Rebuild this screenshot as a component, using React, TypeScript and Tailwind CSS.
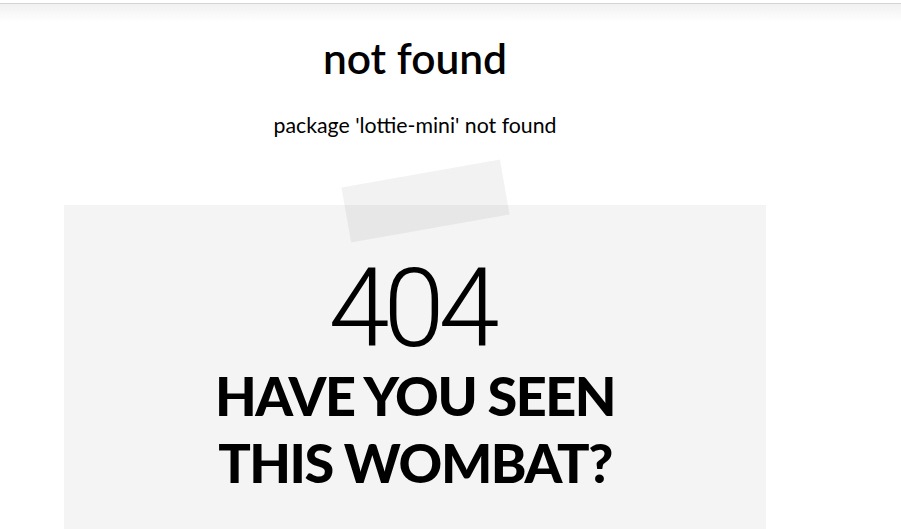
export default function App() {
  return (
    <div className="min-h-[529px] overflow-hidden bg-white font-['Lato',sans-serif] text-black">
      <div className="h-[3px] bg-white" />
      <div className="h-px bg-[#d4d4d4]" />
      <div className="h-[18px] bg-gradient-to-b from-[#f1f1f1] to-white" />

      <main className="w-[830px] px-16">
        <h1 className="mt-[8px] text-center text-[42.5px] font-semibold leading-[56px]">not found</h1>
        <p className="mt-[25px] text-center text-[21.3px] leading-[28px]">package 'lottie-mini' not found</p>

        <div className="relative mt-[66px] bg-[#f4f4f4] pb-10 pt-[54px] text-center">
          <div className="absolute left-[281px] top-[-32px] h-[56px] w-[161px] -rotate-10 bg-black/5" />
          <div className="pr-[8px] font-['Roboto',sans-serif] text-[110px] font-light leading-[100px] tracking-[-6px]">404</div>
          <div className="mt-[3px] text-[54px] font-black uppercase leading-[67px] tracking-[-1.5px]">
            Have you seen
            <br />
            this wombat?
          </div>
        </div>
      </main>
    </div>
  )
}
